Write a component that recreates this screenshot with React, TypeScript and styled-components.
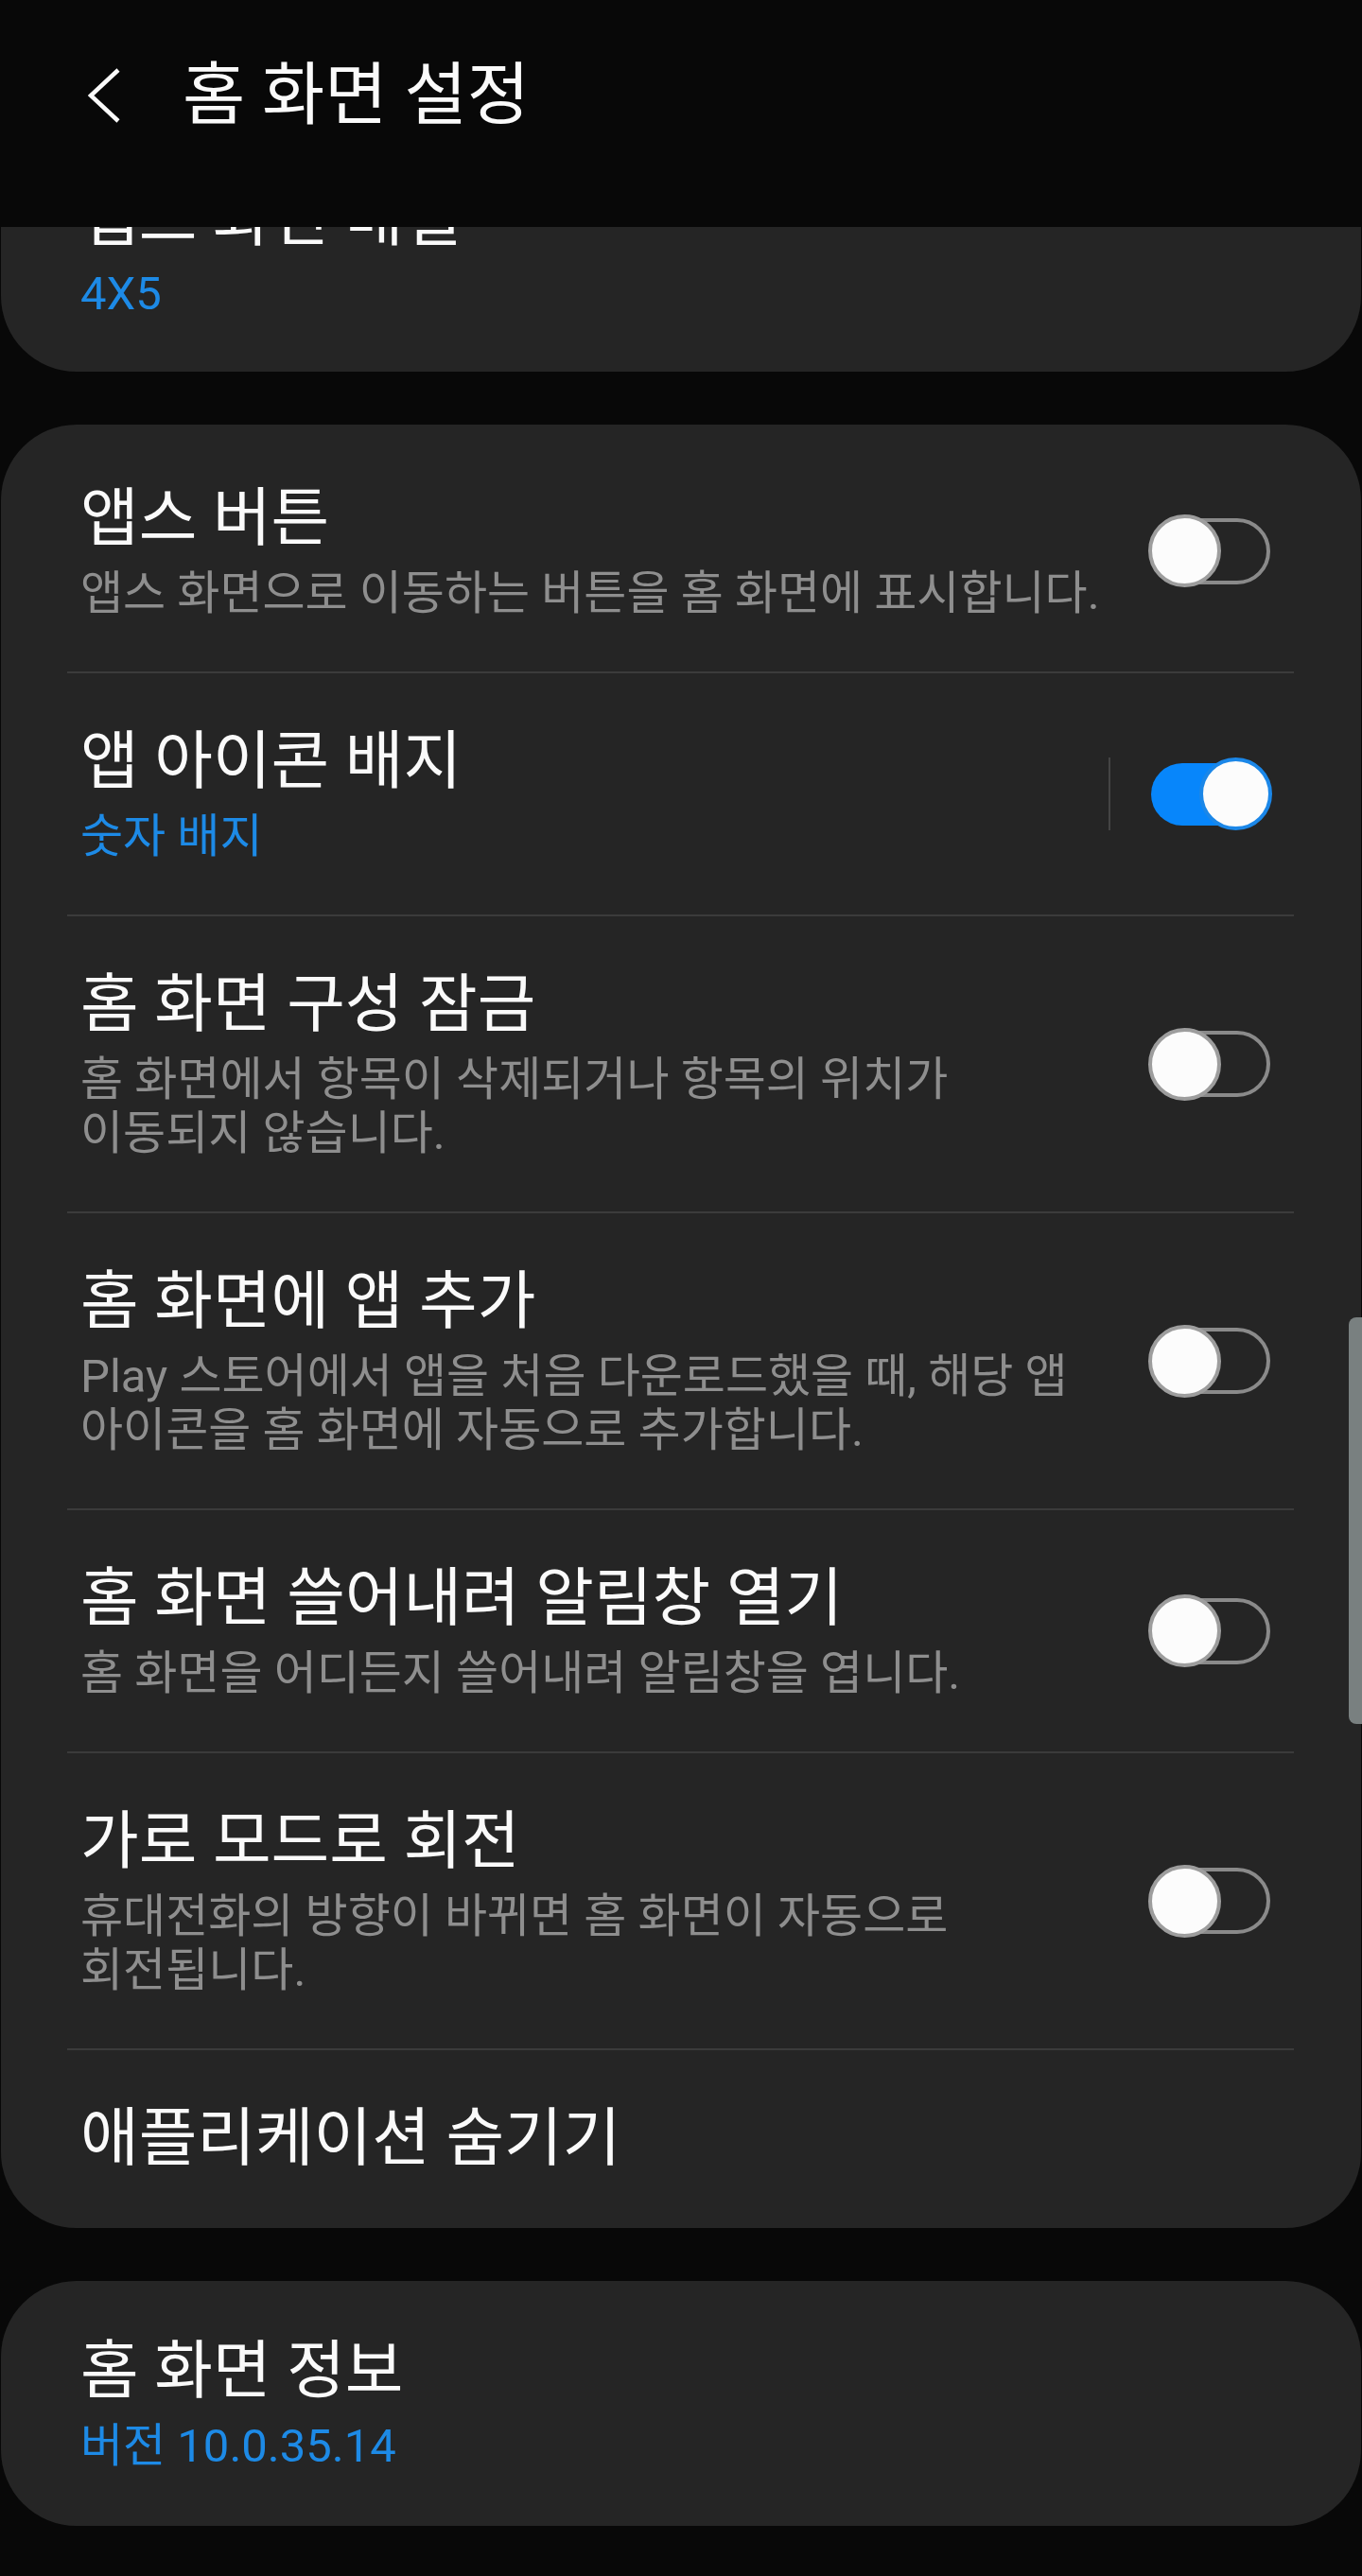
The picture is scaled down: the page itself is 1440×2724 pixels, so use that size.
import React from "react";
import styled, { createGlobalStyle, css } from "styled-components";

const GlobalStyle = createGlobalStyle`
  html, body {
    margin: 0;
    padding: 0;
    background: #080808;
  }
  body {
    font-family: Roboto, "Noto Sans CJK KR", sans-serif;
    -webkit-font-smoothing: antialiased;
    word-break: keep-all;
  }
  * { box-sizing: border-box; }
`;

const Page = styled.div`
  position: relative;
  width: 1440px;
  height: 2724px;
  overflow: hidden;
  background: #080808;
  display: flex;
  flex-direction: column;
`;

const Header = styled.header`
  height: 240px;
  flex-shrink: 0;
  display: flex;
  align-items: center;
  padding: 0 0 38px 93px;
  gap: 66px;
`;

const BackButton = styled.button`
  border: 0;
  padding: 0;
  background: transparent;
  display: flex;
  width: 34px;
  height: 58px;
`;

const HeaderTitle = styled.h1`
  margin: 0;
  font-size: 72px;
  line-height: 84px;
  font-weight: 400;
  color: #fafafa;
`;

const Card = styled.section<{ $clipped?: boolean }>`
  flex-shrink: 0;
  margin: 0 1px;
  background: #252525;
  border-radius: 80px;
  overflow: hidden;
  ${(p) =>
    p.$clipped &&
    css`
      height: 153px;
      border-radius: 0 0 80px 80px;
    `}
`;

const ListCard = styled(Card)`
  margin-top: 56px;
  padding: 6px 0 2px;
`;

const InfoCard = styled(Card)`
  margin-top: 56px;
  padding: 2px 0 2px;
`;

const Row = styled.div<{ $shift?: number }>`
  display: flex;
  align-items: center;
  padding: 54.5px 94px 54.5px 84px;
  ${(p) =>
    p.$shift !== undefined &&
    css`
      margin-top: ${p.$shift}px;
    `}
`;

const Divider = styled.div`
  height: 2px;
  margin: 0 71px 0 70px;
  background: #3b3b3b;
`;

const TextCol = styled.div`
  flex: 1;
  min-width: 0;
  display: flex;
  flex-direction: column;
  gap: 12px;
`;

const Title = styled.div`
  font-size: 67px;
  line-height: 77px;
  color: #fafafa;
  white-space: nowrap;
`;

const Desc = styled.div`
  font-size: 49px;
  line-height: 57px;
  color: #8e8e8e;
`;

const Summary = styled(Desc)`
  color: #1d8ae6;
`;

const SwitchZone = styled.div<{ $separated?: boolean }>`
  width: 173px;
  flex-shrink: 0;
  display: flex;
  align-items: center;
  justify-content: ${(p) => (p.$separated ? "space-between" : "flex-end")};
`;

const Separator = styled.div`
  width: 2px;
  height: 77px;
  background: #444444;
`;

const SwitchBox = styled.div`
  position: relative;
  width: 130px;
  height: 78px;
  display: flex;
  align-items: center;
  justify-content: center;
`;

const Track = styled.div<{ $on: boolean }>`
  width: 126px;
  border-radius: 40px;
  ${(p) =>
    p.$on
      ? css`
          height: 66px;
          background: #0786fb;
        `
      : css`
          height: 70px;
          border: 4px solid #8a8a8a;
          background: transparent;
        `}
`;

const Thumb = styled.div<{ $on: boolean }>`
  position: absolute;
  top: 50%;
  width: 77px;
  height: 77px;
  margin-top: -38.5px;
  border-radius: 50%;
  background: #fcfcfc;
  border: 4px solid ${(p) => (p.$on ? "#1b87e8" : "#9d9d9d")};
  ${(p) => (p.$on ? "right: 0;" : "left: -1px;")}
`;

const ScrollThumb = styled.div`
  position: absolute;
  right: 0;
  top: 1393px;
  width: 14px;
  height: 430px;
  background: #798080;
  border-radius: 8px 0 0 8px;
`;

function Toggle({ on }: { on: boolean }) {
  return (
    <SwitchBox>
      <Track $on={on} />
      <Thumb $on={on} />
    </SwitchBox>
  );
}

type Item = {
  title: string;
  desc?: string;
  summary?: string;
  toggle?: boolean;
  separated?: boolean;
};

const items: Item[] = [
  { title: "앱스 버튼", desc: "앱스 화면으로 이동하는 버튼을 홈 화면에 표시합니다.", toggle: false },
  { title: "앱 아이콘 배지", summary: "숫자 배지", toggle: true, separated: true },
  {
    title: "홈 화면 구성 잠금",
    desc: "홈 화면에서 항목이 삭제되거나 항목의 위치가 이동되지 않습니다.",
    toggle: false,
  },
  {
    title: "홈 화면에 앱 추가",
    desc: "Play 스토어에서 앱을 처음 다운로드했을 때, 해당 앱 아이콘을 홈 화면에 자동으로 추가합니다.",
    toggle: false,
  },
  { title: "홈 화면 쓸어내려 알림창 열기", desc: "홈 화면을 어디든지 쓸어내려 알림창을 엽니다.", toggle: false },
  {
    title: "가로 모드로 회전",
    desc: "휴대전화의 방향이 바뀌면 홈 화면이 자동으로 회전됩니다.",
    toggle: false,
  },
  { title: "애플리케이션 숨기기" },
];

function SettingRow({ item }: { item: Item }) {
  return (
    <Row>
      <TextCol>
        <Title>{item.title}</Title>
        {item.desc && <Desc>{item.desc}</Desc>}
        {item.summary && <Summary>{item.summary}</Summary>}
      </TextCol>
      {item.toggle !== undefined && (
        <SwitchZone $separated={item.separated}>
          {item.separated && <Separator />}
          <Toggle on={item.toggle} />
        </SwitchZone>
      )}
    </Row>
  );
}

export default function App() {
  return (
    <>
      <GlobalStyle />
      <Page>
        <Header>
          <BackButton aria-label="뒤로">
            <svg width="34" height="58" viewBox="0 0 34 58" fill="none">
              <polyline points="32,2 3,29 32,56" stroke="#fafafa" strokeWidth="4.5" fill="none" />
            </svg>
          </BackButton>
          <HeaderTitle>홈 화면 설정</HeaderTitle>
        </Header>

        <Card $clipped>
          <Row $shift={-102}>
            <TextCol>
              <Title>앱스 화면 배열</Title>
              <Summary>4X5</Summary>
            </TextCol>
          </Row>
        </Card>

        <ListCard>
          {items.map((it, i) => (
            <React.Fragment key={it.title}>
              {i > 0 && <Divider />}
              <SettingRow item={it} />
            </React.Fragment>
          ))}
        </ListCard>

        <InfoCard>
          <Row>
            <TextCol>
              <Title>홈 화면 정보</Title>
              <Summary>버전 10.0.35.14</Summary>
            </TextCol>
          </Row>
        </InfoCard>

        <ScrollThumb />
      </Page>
    </>
  );
}
